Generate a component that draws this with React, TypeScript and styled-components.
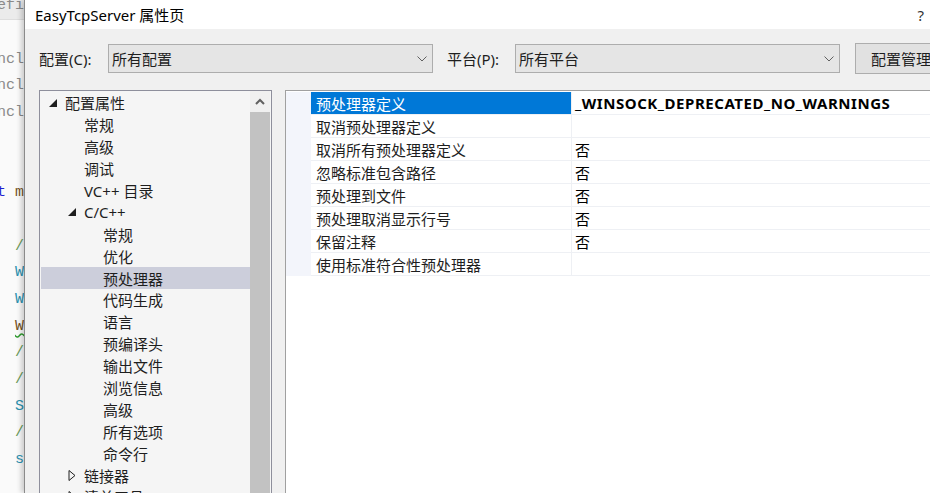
import * as React from "react";
import styled, {createGlobalStyle} from "styled-components";

const uiFont = `"Noto Sans", "Noto Sans CJK SC", sans-serif`;

const GlobalStyle = createGlobalStyle`
    html, body {
        margin: 0;
        padding: 0;
        width: 930px;
        height: 493px;
        overflow: hidden;
        background: #ffffff;
    }
    #root {
        height: 493px;
    }
`;

type CodeLine = {text: string, color?: string, squiggle?: boolean};

const codeLines: CodeLine[] = [
    {text: "efi", color: "#8a8a8a"},
    {text: ""},
    {text: "ncl", color: "#8a8a8a"},
    {text: "ncl", color: "#8a8a8a"},
    {text: "ncl", color: "#8a8a8a"},
    {text: ""},
    {text: ""},
    {text: "t m", color: "#1f1fd0"},
    {text: ""},
    {text: "/", color: "#6b9a5a"},
    {text: "W", color: "#2b91af"},
    {text: "W", color: "#2b91af"},
    {text: "W", color: "#74531f", squiggle: true},
    {text: "/", color: "#6b9a5a"},
    {text: "/", color: "#6b9a5a"},
    {text: "S", color: "#2b91af"},
    {text: "/", color: "#6b9a5a"},
    {text: "s", color: "#2b91af"},
    {text: ""},
];

type TreeItem = {label: string, level: number, expander?: "open" | "closed", selected?: boolean};

const treeItems: TreeItem[] = [
    {label: "配置属性", level: 1, expander: "open"},
    {label: "常规", level: 2},
    {label: "高级", level: 2},
    {label: "调试", level: 2},
    {label: "VC++ 目录", level: 2},
    {label: "C/C++", level: 2, expander: "open"},
    {label: "常规", level: 3},
    {label: "优化", level: 3},
    {label: "预处理器", level: 3, selected: true},
    {label: "代码生成", level: 3},
    {label: "语言", level: 3},
    {label: "预编译头", level: 3},
    {label: "输出文件", level: 3},
    {label: "浏览信息", level: 3},
    {label: "高级", level: 3},
    {label: "所有选项", level: 3},
    {label: "命令行", level: 3},
    {label: "链接器", level: 2, expander: "closed"},
    {label: "清单工具", level: 2, expander: "closed"},
];

type Property = {name: string, value: string, selected?: boolean};

const properties: Property[] = [
    {name: "预处理器定义", value: "_WINSOCK_DEPRECATED_NO_WARNINGS", selected: true},
    {name: "取消预处理器定义", value: ""},
    {name: "取消所有预处理器定义", value: "否"},
    {name: "忽略标准包含路径", value: "否"},
    {name: "预处理到文件", value: "否"},
    {name: "预处理取消显示行号", value: "否"},
    {name: "保留注释", value: "否"},
    {name: "使用标准符合性预处理器", value: ""},
];

const Screen = styled.div`
    display: flex;
    width: 930px;
    height: 493px;
    overflow: hidden;
    font-family: ${uiFont};
`;

const EditorStrip = styled.div`
    flex: none;
    width: 24px;
    background: #fafafa;
    overflow: hidden;
    display: flex;
    flex-direction: column;
    margin-top: -7px;
`;

const EditorLine = styled.div<{$current?: boolean}>`
    flex: none;
    height: 26.7px;
    display: flex;
    align-items: center;
    justify-content: flex-end;
    white-space: pre;
    font-family: "Liberation Mono", "DejaVu Sans Mono", monospace;
    font-size: 15px;
    background: ${p => p.$current ? "#ebebeb" : "transparent"};
    border-bottom: 1px solid ${p => p.$current ? "#dedede" : "transparent"};
    box-sizing: border-box;
`;

const CodeText = styled.span<{$color: string, $squiggle?: boolean}>`
    color: ${p => p.$color};
    text-decoration: ${p => p.$squiggle ? "underline wavy #2e9a2e" : "none"};
    text-underline-offset: 3px;
`;

const Dialog = styled.div`
    flex: 1;
    min-width: 0;
    display: flex;
    flex-direction: column;
    background: #f0f0f0;
    border-left: 1px solid #8a8a8a;
    box-shadow: -3px 0 5px rgba(0, 0, 0, 0.18);
    position: relative;
    overflow: hidden;
`;

const TitleBar = styled.div`
    flex: none;
    height: 29px;
    display: flex;
    align-items: center;
    padding: 0 6px 0 10px;
    background: #ffffff;
    font-size: 15px;
    color: #000000;
`;

const HelpMark = styled.span`
    margin-left: auto;
    font-size: 15px;
    color: #333333;
`;

const Body = styled.div`
    flex: 1;
    min-height: 0;
    display: flex;
    flex-direction: column;
    padding: 14px 0 0 14px;
`;

const Toolbar = styled.div`
    flex: none;
    height: 31px;
    display: flex;
    align-items: center;
    white-space: nowrap;
`;

const FieldLabel = styled.span<{$width: number}>`
    flex: none;
    width: ${p => p.$width}px;
    font-size: 15px;
    color: #1e1e1e;
`;

const Select = styled.div<{$gapAfter: number}>`
    flex: none;
    width: 325px;
    height: 29px;
    box-sizing: border-box;
    display: flex;
    align-items: center;
    padding: 0 5px 0 3px;
    margin-right: ${p => p.$gapAfter}px;
    background: #e5e5e5;
    border: 1px solid #adadad;
    font-size: 15px;
    color: #1e1e1e;
`;

const SelectText = styled.span`
    flex: 1;
`;

const ToolButton = styled.div`
    flex: none;
    height: 31px;
    box-sizing: border-box;
    display: flex;
    align-items: center;
    padding: 0 15px;
    background: #e1e1e1;
    border: 1px solid #adadad;
    font-size: 15px;
    color: #1e1e1e;
`;

const Main = styled.div`
    flex: 1;
    min-height: 0;
    display: flex;
    margin-top: 16px;
`;

const TreePanel = styled.div`
    flex: none;
    width: 233px;
    box-sizing: border-box;
    display: flex;
    border: 1px solid #8e8f9c;
    border-bottom: none;
    background: #f5f5f5;
`;

const TreeList = styled.div`
    flex: 1;
    min-width: 0;
    padding: 1px 0 0 1px;
    overflow: hidden;
`;

const TreeRow = styled.div<{$level: number, $selected?: boolean}>`
    height: 21.9px;
    display: flex;
    align-items: center;
    padding-left: ${p => 5 + 19 * (p.$level - 1)}px;
    background: ${p => p.$selected ? "#cccedb" : "transparent"};
    font-size: 15px;
    color: #1e1e1e;
    white-space: nowrap;
`;

const Expander = styled.span`
    flex: none;
    width: 19px;
    display: flex;
    align-items: center;
    padding-left: 3px;
    box-sizing: border-box;
`;

const Scrollbar = styled.div`
    flex: none;
    width: 20px;
    margin-right: 1px;
    display: flex;
    flex-direction: column;
`;

const ScrollButton = styled.div`
    flex: none;
    height: 21px;
    display: flex;
    align-items: center;
    justify-content: center;
    background: #f0f0f0;
`;

const ScrollThumb = styled.div`
    flex: 1;
    background: #c2c2c2;
`;

const Splitter = styled.div`
    flex: none;
    width: 13px;
`;

const GridPanel = styled.div`
    flex: 1;
    min-width: 0;
    border-top: 1px solid #a0a0a0;
    border-left: 1px solid #a0a0a0;
    background: #ffffff;
    padding-top: 1px;
`;

const GridRow = styled.div`
    display: flex;
    height: 23px;
`;

const MarginCell = styled.div`
    flex: none;
    width: 25px;
    background: #f3f5fb;
`;

const NameCell = styled.div<{$selected?: boolean}>`
    flex: none;
    width: 260px;
    box-sizing: border-box;
    display: flex;
    align-items: center;
    padding-left: 5px;
    border-bottom: 1px solid #eef0f4;
    background: ${p => p.$selected ? "#0078d7" : "#ffffff"};
    background-clip: padding-box;
    color: ${p => p.$selected ? "#ffffff" : "#1e1e1e"};
    font-size: 15px;
    white-space: nowrap;
`;

const ValueCell = styled.div<{$bold?: boolean}>`
    flex: 1;
    box-sizing: border-box;
    display: flex;
    align-items: center;
    padding-left: 3px;
    border-left: 1px solid #eef0f4;
    border-bottom: 1px solid #eef0f4;
    color: #000000;
    font-size: 15px;
    font-weight: ${p => p.$bold ? 700 : 400};
    letter-spacing: ${p => p.$bold ? "0.55px" : "0"};
    white-space: nowrap;
`;

function Chevron() {
    return <svg width="10" height="6" viewBox="0 0 10 6">
        <polyline points="0.5,0.5 5,5 9.5,0.5" fill="none" stroke="#606060" strokeWidth="1"/>
    </svg>;
}

function ExpanderGlyph(props: {kind: "open" | "closed"}) {
    if (props.kind === "open") {
        return <svg width="8" height="8" viewBox="0 0 8 8">
            <polygon points="8,0 8,8 0,8" fill="#1e1e1e"/>
        </svg>;
    }
    return <svg width="8" height="11" viewBox="0 0 8 11">
        <polygon points="1,0.5 7,5.5 1,10.5" fill="none" stroke="#1e1e1e" strokeWidth="1"/>
    </svg>;
}

export default function App() {
    return <Screen>
        <GlobalStyle/>
        <EditorStrip>
            {codeLines.map((line, i) =>
                <EditorLine key={i} $current={i === 0}>
                    <CodeText $color={line.color ?? "#000"} $squiggle={line.squiggle}>
                        {line.text === "t m" ? <>t <CodeText $color="#74531f">m</CodeText></> : line.text}
                    </CodeText>
                </EditorLine>
            )}
        </EditorStrip>
        <Dialog>
            <TitleBar>
                EasyTcpServer 属性页
                <HelpMark>?</HelpMark>
            </TitleBar>
            <Body>
                <Toolbar>
                    <FieldLabel $width={69}>配置(C):</FieldLabel>
                    <Select $gapAfter={14}>
                        <SelectText>所有配置</SelectText>
                        <Chevron/>
                    </Select>
                    <FieldLabel $width={68}>平台(P):</FieldLabel>
                    <Select $gapAfter={15}>
                        <SelectText>所有平台</SelectText>
                        <Chevron/>
                    </Select>
                    <ToolButton>配置管理器(O)...</ToolButton>
                </Toolbar>
                <Main>
                    <TreePanel>
                        <TreeList>
                            {treeItems.map((item, i) =>
                                <TreeRow key={i} $level={item.level} $selected={item.selected}>
                                    <Expander>
                                        {item.expander && <ExpanderGlyph kind={item.expander}/>}
                                    </Expander>
                                    {item.label}
                                </TreeRow>
                            )}
                        </TreeList>
                        <Scrollbar>
                            <ScrollButton>
                                <svg width="10" height="7" viewBox="0 0 10 7">
                                    <polyline points="1,6 5,2 9,6" fill="none" stroke="#606060" strokeWidth="2"/>
                                </svg>
                            </ScrollButton>
                            <ScrollThumb/>
                        </Scrollbar>
                    </TreePanel>
                    <Splitter/>
                    <GridPanel>
                        {properties.map((prop, i) =>
                            <GridRow key={i}>
                                <MarginCell/>
                                <NameCell $selected={prop.selected}>{prop.name}</NameCell>
                                <ValueCell $bold={prop.selected}>{prop.value}</ValueCell>
                            </GridRow>
                        )}
                    </GridPanel>
                </Main>
            </Body>
        </Dialog>
    </Screen>;
}
